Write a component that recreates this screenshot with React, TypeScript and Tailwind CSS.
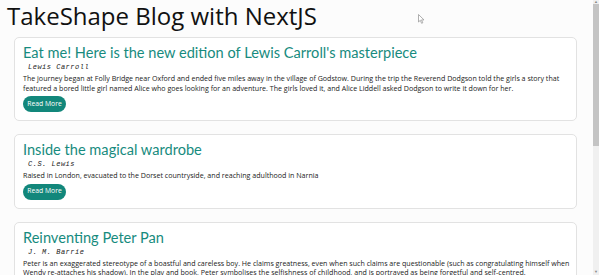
import React from "react";

const posts = [
  {
    title: "Eat me! Here is the new edition of Lewis Carroll's masterpiece",
    author: "Lewis Carroll",
    lines: [
      "The journey began at Folly Bridge near Oxford and ended five miles away in the village of Godstow. During the trip the Reverend Dodgson told the girls a story that",
      "featured a bored little girl named Alice who goes looking for an adventure. The girls loved it, and Alice Liddell asked Dodgson to write it down for her.",
    ],
    button: true,
  },
  {
    title: "Inside the magical wardrobe",
    author: "C.S. Lewis",
    lines: ["Raised in London, evacuated to the Dorset countryside, and reaching adulthood in Narnia"],
    button: true,
  },
  {
    title: "Reinventing Peter Pan",
    author: "J. M. Barrie",
    lines: [
      "Peter is an exaggerated stereotype of a boastful and careless boy. He claims greatness, even when such claims are questionable (such as congratulating himself when",
      "Wendy re-attaches his shadow). In the play and book, Peter symbolises the selfishness of childhood, and is portrayed as being forgetful and self-centred.",
    ],
    button: false,
  },
];

function Card({ p }: { p: (typeof posts)[number] }) {
  return (
    <div className="ml-[14px] mr-[16px] flex flex-col rounded-[5px] border border-[#e2e2e2] bg-white px-[8px] pt-[6px] pb-[8px]">
      <h2
        className="text-[14.6px] leading-[18px] text-[#178b7e] whitespace-nowrap"
        style={{ fontFamily: 'Lato, "Noto Sans", sans-serif' }}
      >
        {p.title}
      </h2>
      <div
        className="mt-[1px] pl-[5px] text-[7px] leading-[9px] italic text-[#222] tracking-[0.5px]"
        style={{ fontFamily: '"Liberation Mono", monospace' }}
      >
        {p.author}
      </div>
      <div
        className="mt-[2px] text-[7.1px] leading-[9.5px] text-[#222]"
        style={{ fontFamily: '"Open Sans", "Noto Sans", sans-serif' }}
      >
        {p.lines.map((l, i) => (
          <div key={i} className="whitespace-nowrap">
            {l}
          </div>
        ))}
      </div>
      {p.button && (
        <div className="mt-[3px] flex">
          <div
            className="flex h-[16px] w-[43px] items-center justify-center rounded-full bg-[#12877b] text-[6.8px] leading-none text-white"
            style={{ fontFamily: '"Open Sans", sans-serif' }}
          >
            Read More
          </div>
        </div>
      )}
    </div>
  );
}

export default function App() {
  return (
    <div className="relative flex h-[275px] w-[599px] overflow-hidden bg-[#fcfcfc]">
      <div className="flex-1 overflow-hidden">
        <h1
          className="pl-[7px] text-[24px] leading-[32px] text-[#111]"
          style={{ fontFamily: '"Open Sans", sans-serif' }}
        >
          TakeShape Blog with NextJS
        </h1>
        <div className="mt-[5px] flex flex-col gap-[13px]">
          {posts.map((p, i) => (
            <Card key={i} p={p} />
          ))}
        </div>
      </div>
      <div className="flex w-[6px] flex-col bg-[#f0f0f0]">
        <div className="flex h-[4px] items-center justify-center text-[4px] leading-none text-[#888]">▲</div>
        <div className="h-[142px] bg-[#c4c4c4]" />
        <div className="flex-1" />
        <div className="flex h-[6px] items-center justify-center text-[4px] leading-none text-[#888]">▼</div>
      </div>
      <svg className="absolute left-[418px] top-[14px]" width="7" height="10" viewBox="0 0 7 10">
        <path d="M0.5 0.5 L0.5 8 L2.3 6.3 L3.6 9.3 L4.8 8.8 L3.5 5.9 L6 5.9 Z" fill="#fff" stroke="#9a9a9a" strokeWidth="0.8" />
      </svg>
    </div>
  );
}
